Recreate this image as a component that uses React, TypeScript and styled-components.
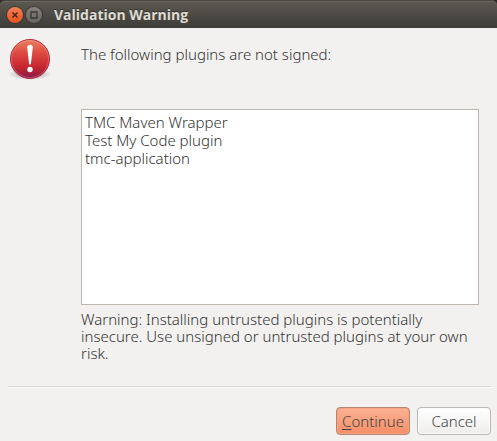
import React from "react";
import styled, { createGlobalStyle, css } from "styled-components";

const GlobalStyle = createGlobalStyle`
  * { box-sizing: border-box; }
  body {
    margin: 0;
    background: #f2f1f0;
    color: #333333;
    font-family: "Noto Sans", "Open Sans", sans-serif;
    font-size: 15px;
    font-weight: 300;
  }
`;

const Window = styled.main`
  display: flex;
  flex-direction: column;
  min-height: 100vh;
  background: #f2f1f0;
`;

const TitleBar = styled.header`
  display: flex;
  align-items: center;
  height: 28px;
  padding: 0 7px;
  background: linear-gradient(#5c5950, #3d3c38);
  border-top: 1px solid #4a4842;
  border-radius: 5px 5px 0 0;
  box-shadow: inset 0 1px #69665d;
`;

const TitleBacking = styled.div`
  background: #2c2b28;
`;

const WindowButton = styled.button<{ $tone: "close" | "plain" }>`
  display: flex;
  width: 16px;
  height: 16px;
  padding: 0;
  border: 0;
  border-radius: 50%;
  box-shadow: 0 0 0 1px #383733;
  ${({ $tone }) =>
    $tone === "close"
      ? css`
          background: linear-gradient(#f5805a, #e4511d);
          color: #542314;
        `
      : css`
          background: linear-gradient(#85837b, #66645e);
          color: #393834;
        `}
`;

const WindowButtons = styled.div`
  display: flex;
  gap: 3px;
`;

const Title = styled.h1`
  margin: 0 0 0 12px;
  color: #dfdbd2;
  font-family: "Open Sans", "Noto Sans", sans-serif;
  font-size: 14px;
  line-height: 20px;
  font-weight: 700;
  text-shadow: 0 -1px #33322f;
`;

const Content = styled.section`
  display: grid;
  grid-template-columns: 44px 1fr;
  grid-template-rows: auto 1fr auto;
  column-gap: 29px;
  flex: 1;
  padding: 9px 18px 24px 8px;
`;

const Message = styled.p`
  margin: 0;
  padding-top: 7px;
  line-height: 20px;
`;

const PluginList = styled.ul`
  grid-column: 2;
  min-height: 196px;
  margin: 28px 0 6px;
  padding: 3px;
  list-style: none;
  background: #fff;
  border: 1px solid #bfb8b1;
`;

const PluginItem = styled.li`
  line-height: 18px;
`;

const Warning = styled.p`
  grid-column: 2;
  margin: 0;
  line-height: 17px;
`;

const Footer = styled.footer`
  display: flex;
  justify-content: flex-end;
  gap: 7px;
  margin: 0 6px 0 8px;
  padding: 20px 0 6px;
  border-top: 1px solid #dad8d6;
  box-shadow: inset 0 1px #fafafa;
`;

const ActionButton = styled.button<{ $primary?: boolean }>`
  width: 74px;
  height: 28px;
  padding: 0;
  border: 1px solid ${({ $primary }) => ($primary ? "#b48673" : "#bab7b4")};
  border-radius: 4px;
  color: #444444;
  font: inherit;
  line-height: 20px;
  background: ${({ $primary }) =>
    $primary ? "linear-gradient(#fcb294, #f48e67)" : "linear-gradient(#ffffff, #eeedec)"};
  box-shadow: inset 0 0 0 1px ${({ $primary }) => ($primary ? "#f9a180" : "#fbfbfb")};
`;

const Mnemonic = styled.span`
  text-decoration: underline;
  text-underline-offset: 2px;
  text-decoration-thickness: 1px;
`;

function ErrorIcon() {
  return (
    <svg width="44" height="44" viewBox="0 0 44 44" role="img" aria-label="Warning">
      <defs>
        <linearGradient id="ball" x1="0" y1="0" x2="0" y2="1">
          <stop offset="0" stopColor="#ed8060" />
          <stop offset="0.35" stopColor="#dc4a41" />
          <stop offset="0.7" stopColor="#c6262e" />
          <stop offset="1" stopColor="#8a1a4a" />
        </linearGradient>
        <radialGradient id="shade">
          <stop offset="0.5" stopColor="#000" stopOpacity="0.2" />
          <stop offset="1" stopColor="#000" stopOpacity="0" />
        </radialGradient>
      </defs>
      <ellipse cx="22" cy="37" rx="22" ry="6" fill="url(#shade)" />
      <circle cx="22" cy="22" r="19.5" fill="url(#ball)" stroke="#b5263a" />
      <circle cx="22" cy="22" r="18.5" fill="none" stroke="#fff" strokeOpacity="0.2" />
      <path d="M19.200 10.500a2.800 2.800 0 0 1 5.600 0L22.900 27q-.900 1.600-1.800 0Z" fill="#fff" />
      <circle cx="22" cy="32.500" r="2.700" fill="#fff" />
    </svg>
  );
}

const plugins = ["TMC Maven Wrapper", "Test My Code plugin", "tmc-application"];

export default function App() {
  return (
    <>
      <GlobalStyle />
      <Window>
        <TitleBacking>
          <TitleBar>
            <WindowButtons>
              <WindowButton $tone="close" aria-label="Close">
                <svg width="16" height="16" viewBox="0 0 16 16">
                  <path d="m5.500 5.500 5 5m0-5-5 5" stroke="currentColor" strokeWidth="1.500" />
                </svg>
              </WindowButton>
              <WindowButton $tone="plain" aria-label="Maximize">
                <svg width="16" height="16" viewBox="0 0 16 16">
                  <path d="M5 5h6v6H5Z" fill="none" stroke="currentColor" strokeWidth="1.300" />
                </svg>
              </WindowButton>
            </WindowButtons>
            <Title>Validation Warning</Title>
          </TitleBar>
        </TitleBacking>
        <Content>
          <ErrorIcon />
          <Message id="message">The following plugins are not signed:</Message>
          <PluginList aria-labelledby="message">
            {plugins.map((name) => (
              <PluginItem key={name}>{name}</PluginItem>
            ))}
          </PluginList>
          <Warning>
            Warning: Installing untrusted plugins is potentially insecure. Use unsigned or untrusted
            plugins at your own risk.
          </Warning>
        </Content>
        <Footer>
          <ActionButton $primary>
            <Mnemonic>C</Mnemonic>ontinue
          </ActionButton>
          <ActionButton>Cancel</ActionButton>
        </Footer>
      </Window>
    </>
  );
}
